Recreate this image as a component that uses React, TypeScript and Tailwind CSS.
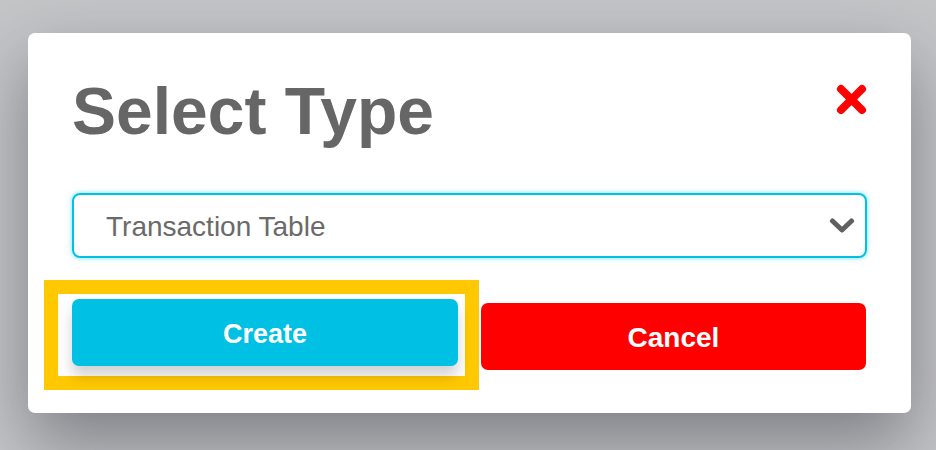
import React from 'react';

const font = { fontFamily: '"Liberation Sans", Arial, Helvetica, sans-serif' };

function CloseIcon() {
  return (
    <svg width="31" height="31" viewBox="0 0 31 31" fill="none">
      <path d="M5 5 L26 26 M26 5 L5 26" stroke="#ff0000" strokeWidth="8" strokeLinecap="round" />
    </svg>
  );
}

function Chevron() {
  return (
    <svg width="26" height="18" viewBox="0 0 26 18" fill="none">
      <path d="M3.5 4 L13 13 L22.5 4" stroke="#606060" strokeWidth="5" strokeLinecap="round" strokeLinejoin="round" />
    </svg>
  );
}

export default function App() {
  return (
    <div
      className="w-[936px] h-[450px] overflow-hidden bg-[#c4c5c7] pl-[28px] pt-[33px]"
      style={font}
    >
      <div className="w-[883px] h-[380px] bg-white rounded-[7px] px-[44px] pt-[45px] shadow-[0_30px_70px_rgba(30,30,45,0.42)]">
        {/* Header */}
        <div className="flex items-start justify-between">
          <h1 className="text-[66px] leading-none font-bold text-[#666666]">Select Type</h1>
          <button className="mt-[6px]">
            <CloseIcon />
          </button>
        </div>

        {/* Select */}
        <div className="mt-[49px] h-[65px] rounded-[8px] border-2 border-[#00c0e4] shadow-[0_0_5px_rgba(0,192,228,0.55)] flex items-center justify-between pl-[32px] pr-[10px]">
          <span className="text-[28px] text-[#6a6a6a] pt-[3px]">Transaction Table</span>
          <Chevron />
        </div>

        {/* Buttons */}
        <div className="mt-[41px] flex items-start gap-[23px]">
          <div className="relative w-[386px]">
            <span className="absolute left-[-28px] top-[-19px] w-[435px] h-[110px] border-[14px] border-[#ffc800] pointer-events-none" />
            <button className="relative w-full h-[67px] pt-[3px] rounded-[7px] bg-[#00c0e4] text-white font-bold text-[27px] shadow-[0_10px_14px_rgba(0,0,0,0.18)]">
              Create
            </button>
          </div>
          <button className="mt-[4px] w-[385px] h-[67px] pt-[3px] rounded-[7px] bg-[#ff0000] text-white font-bold text-[28px]">
            Cancel
          </button>
        </div>
      </div>
    </div>
  );
}
